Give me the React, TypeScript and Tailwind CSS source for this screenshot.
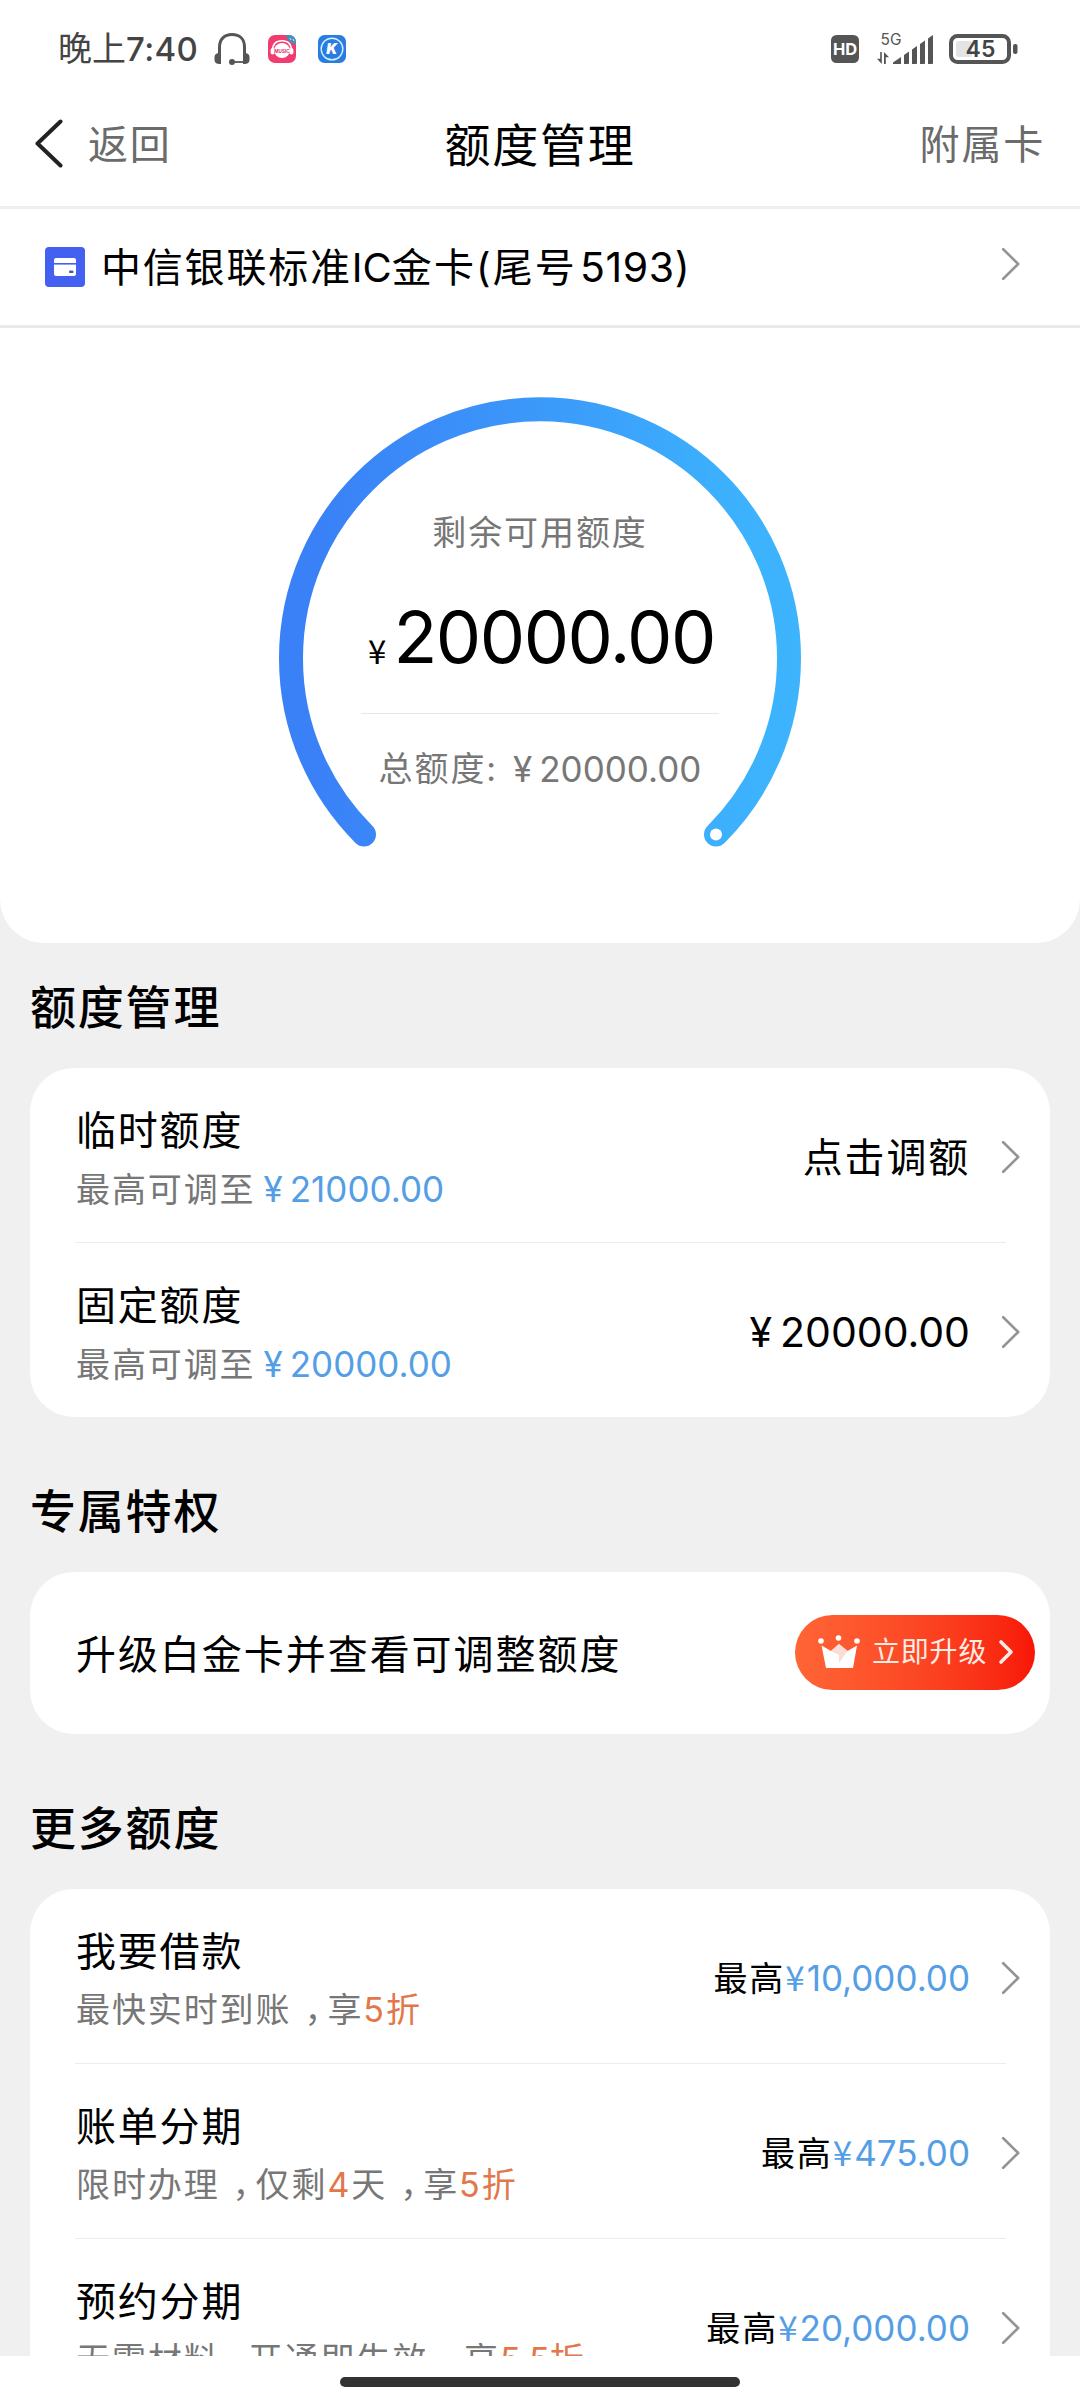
import type { ReactNode } from 'react';

const ChevronRight = () => (
  <svg className="h-[34px] w-[20px] shrink-0" viewBox="0 0 20 34" fill="none">
    <path d="M2.2 2.2 L17.2 17 L2.2 31.8" stroke="#949494" strokeWidth="2.6" strokeLinecap="round" strokeLinejoin="round" />
  </svg>
);

// Half-width comma centred in a full-width cell
const Comma = () => (
  <span className="inline-block w-[36px] pl-[13px] [font-feature-settings:'halt']">，</span>
);

const NarrowComma = () => (
  <span className="inline-block w-[29px] pl-[10px] [font-feature-settings:'halt']">，</span>
);

const Hot = ({ children }: { children: ReactNode }) => <span className="text-[#e2774a]">{children}</span>;

const StatusBar = () => (
  <div className="flex h-[84px] items-center pt-[14px] pl-[58px] pr-[62px]">
    <span className="text-[34px] leading-[40px] text-[#444]">晚上</span>
    <span className="text-[33px] font-medium leading-[40px] tracking-[0.4px] text-[#444]">7:40</span>
    <svg className="ml-[16px] h-[32px] w-[36px]" viewBox="0 0 36 32" fill="none">
      <path d="M5.5 29 V14 C5.5 6 10.5 1.6 18 1.6 C25.5 1.6 30.5 6 30.5 14 V29" stroke="#555" strokeWidth="3" />
      <path d="M7 20 V31 H5.5 C2.5 31 0.5 29.5 0.5 27 V24 C0.5 21.5 2.5 20 5.5 20 Z" fill="#555" />
      <path d="M29 20 V31 H30.5 C33.5 31 35.5 29.5 35.5 27 V24 C35.5 21.5 33.5 20 30.5 20 Z" fill="#555" />
      <path d="M18 29 H31" stroke="#555" strokeWidth="1.8" />
      <circle cx="18" cy="29" r="3" fill="#555" />
    </svg>
    {/* Music app */}
    <svg className="ml-[18px] h-[28px] w-[28px]" viewBox="0 0 28 28">
      <clipPath id="music">
        <rect width="28" height="28" rx="7" />
      </clipPath>
      <g clipPath="url(#music)">
        <rect width="28" height="28" fill="#f23c70" />
        <path d="M18 0 H28 V9 C23 8.5 19.5 5.5 18 0 Z" fill="#3b95bd" />
        <path d="M22 3 L23 5 M25 4 L26 6" stroke="#c8e6f2" strokeWidth="1" />
        <path d="M4.5 16 C4.5 9 8.5 5.8 14 5.8 C19.5 5.8 23.5 9 23.5 16" fill="none" stroke="#fff" strokeWidth="1.6" />
        <ellipse cx="14" cy="15.5" rx="8" ry="7.6" fill="#fff" />
        <rect x="2.6" y="13" width="4" height="6.5" rx="2" fill="#fff" />
        <rect x="21.4" y="13" width="4" height="6.5" rx="2" fill="#fff" />
        <text x="14" y="17.5" textAnchor="middle" fontSize="4.6" fontWeight="700" fill="#e0306a">MUSIC</text>
      </g>
    </svg>
    <svg className="ml-[22px] h-[28px] w-[28px]" viewBox="0 0 28 28">
      <rect width="28" height="28" rx="6.5" fill="#2a7de0" />
      <circle cx="14" cy="14" r="10.8" fill="none" stroke="#d5f1ff" strokeWidth="1.4" />
      <text x="13.8" y="19.2" textAnchor="middle" fontSize="14.5" fontWeight="900" fontStyle="italic" fill="#fff">K</text>
    </svg>

    <svg className="ml-auto h-[28px] w-[28px]" viewBox="0 0 28 28">
      <rect width="28" height="28" rx="5.5" fill="#555" />
      <text x="14" y="20" textAnchor="middle" fontSize="16.5" fontWeight="700" fill="#fff">HD</text>
    </svg>
    <svg className="ml-[18px] h-[32px] w-[56px] overflow-visible" viewBox="0 0 56 32" fill="#555">
      <text x="3.6" y="12" fontSize="15.5" fill="#555">5G</text>
      <path d="M3.2 19 H4.8 V31 L0 25.8 H3.2 Z" />
      <path d="M7 31 V19 L12 24.2 H8.8 V31 Z" />
      <path d="M16 31 V29.5 L24 24 V31 Z" />
      <path d="M27 31 V22 L32 18.5 V30 Q32 31 31 31 Z" />
      <path d="M35 31 V16.5 L40 13 V30 Q40 31 39 31 Z" />
      <path d="M43 31 V11 L48 7.5 V30 Q48 31 47 31 Z" />
      <path d="M51 31 V5.5 L56 2 V30 Q56 31 55 31 Z" />
    </svg>
    <svg className="ml-[16px] h-[30px] w-[69px]" viewBox="0 0 69 30">
      <rect x="2" y="2" width="58" height="26" rx="6.5" fill="none" stroke="#555" strokeWidth="4" />
      <rect x="7" y="7" width="16" height="16" rx="2" fill="#e4e4e4" />
      <rect x="64" y="10" width="4.5" height="10" rx="2" fill="#555" />
      <text x="31.5" y="23.3" textAnchor="middle" fontSize="23" fontWeight="600" fill="#444">45</text>
    </svg>
  </div>
);

const Header = () => (
  <div className="grid h-[125px] grid-cols-3 items-center border-b-[3px] border-[#eee] px-[35px]">
    <div className="flex items-center">
      <svg className="mb-[2px] h-[50px] w-[28px]" viewBox="0 0 28 50" fill="none">
        <path d="M25.5 2.5 L2.5 24.5 L25.5 46.5" stroke="#222" strokeWidth="4" strokeLinecap="round" strokeLinejoin="round" />
      </svg>
      <span className="ml-[25px] text-[40px] tracking-[1.8px] text-[#6b6b6b]">返回</span>
    </div>
    <h1 className="text-center text-[46px] tracking-[1.8px]">额度管理</h1>
    <span className="text-right text-[40px] tracking-[1.8px] text-[#6b6b6b]">附属卡</span>
  </div>
);

const CardSelector = () => (
  <div className="flex h-[119px] items-center border-b-[3px] border-[#eaeaea] pl-[45px] pr-[59px]">
    <svg className="h-[40px] w-[40px]" viewBox="0 0 40 40">
      <rect width="40" height="40" rx="4" fill="#4360f0" />
      <rect x="9" y="11" width="22" height="18" rx="2" fill="#fff" />
      <rect x="9" y="16" width="22" height="1.6" fill="#4360f0" />
      <rect x="24" y="23.5" width="4.5" height="2.6" rx="1.2" fill="#4b5ba8" />
    </svg>
    <span className="ml-[16px] pt-[2px] text-[40px]">
      <span className="tracking-[1.8px]">中信银联标准</span>
      IC
      <span className="tracking-[2.1px]">金卡(尾号</span>
      <span className="ml-[3px] text-[41px] tracking-[0.6px]">5193)</span>
    </span>
    <div className="ml-auto mb-[6px]">
      <ChevronRight />
    </div>
  </div>
);

const Gauge = () => (
  <div className="h-[615px] rounded-b-[44px] bg-white pt-[69px]">
    <div className="relative mx-auto flex h-[460px] w-[522px] flex-col items-center">
      <svg className="absolute inset-0" width="522" height="460" viewBox="0 0 522 460" fill="none">
        <defs>
          <linearGradient id="arc" gradientUnits="userSpaceOnUse" x1="0" y1="0" x2="522" y2="0">
            <stop offset="0.08" stopColor="#3a81f7" />
            <stop offset="0.5" stopColor="#3b99fa" />
            <stop offset="0.85" stopColor="#3cb0fd" />
            <stop offset="1" stopColor="#3eb4fd" />
          </linearGradient>
        </defs>
        <path d="M85 437.5 A249 249 0 1 1 437 437.5" stroke="url(#arc)" strokeWidth="24" strokeLinecap="round" />
        <circle cx="437" cy="437.5" r="6" fill="#fff" />
      </svg>
      <p className="mt-[116px] text-[34px] leading-[40px] tracking-[1.9px] text-[#777]">剩余可用额度</p>
      <p className="mt-[44px] flex items-baseline pl-[3px] text-[72px] leading-[80px]">
        <span className="mr-[7px] translate-y-px font-['Noto_Sans_CJK_SC'] text-[33px] leading-none">¥</span>
        <span className="tracking-[-1.5px]">20000.00</span>
      </p>
      <div className="mt-[36px] h-px w-[358px] bg-[#e8e8e8]" />
      <p className="mt-[35px] flex text-[35px] leading-[40px] text-[#777]">
        <span className="text-[34px] tracking-[1.9px]">总额度:</span>
        <span className="ml-[15px] mr-[7px]">¥</span>
        <span>20000.00</span>
      </p>
    </div>
  </div>
);

type RowProps = { title: string; sub: ReactNode; value: ReactNode; last?: boolean };

const Row = ({ title, sub, value, last }: RowProps) => (
  <>
    <div className="flex h-[174px] shrink-0 justify-between pl-[46px] pr-[29px] pt-[40px]">
      <div className="whitespace-nowrap">
        <p className="text-[40px] leading-[46px] tracking-[1.8px]">{title}</p>
        <p className="mt-[17px] text-[34px] leading-[36px] tracking-[1.9px] text-[#777]">{sub}</p>
      </div>
      <div className="flex h-[98px] items-center gap-[31px]">
        <div className="flex whitespace-nowrap pt-px">{value}</div>
        <ChevronRight />
      </div>
    </div>
    {!last && <div className="ml-[45px] mr-[44px] h-px shrink-0 bg-[#ececec]" />}
  </>
);

const MaxTo = ({ amount }: { amount: string }) => (
  <>
    最高可调至
    <span className="ml-[8px] text-[35px] tracking-normal text-[#549ee6]">
      <span className="mr-[7px]">¥</span>
      {amount}
    </span>
  </>
);

const MaxValue = ({ amount }: { amount: string }) => (
  <p className="text-[35px]">
    <span className="text-[34px] tracking-[1.9px]">最高</span>
    <span className="text-[#549ee6]">
      <span className="mr-[2px] font-['Noto_Sans_CJK_SC'] leading-none">¥</span>
      {amount}
    </span>
  </p>
);

const Heading = ({ children }: { children: string }) => (
  <h2 className="mb-[36px] text-[46px] font-medium leading-[50px] tracking-[1.8px]">{children}</h2>
);

const moreLimits = [
  {
    title: '我要借款',
    sub: <>最快实时到账<Comma />享<Hot>5折</Hot></>,
    amount: '10,000.00',
  },
  {
    title: '账单分期',
    sub: <>限时办理<Comma />仅剩<Hot>4</Hot>天<Comma />享<Hot>5折</Hot></>,
    amount: '475.00',
  },
  {
    title: '预约分期',
    sub: (
      <>
        无需材料<NarrowComma />开通即生效<Comma />享<Hot><span className="tracking-normal">5.5</span>折</Hot>
      </>
    ),
    amount: '20,000.00',
  },
];

export default function App() {
  return (
    <div className="flex h-[2400px] w-[1080px] flex-col overflow-hidden bg-white font-['Inter','Noto_Sans_CJK_SC',sans-serif] text-black">
      <StatusBar />
      <Header />
      <CardSelector />

      <main className="flex min-h-0 flex-1 flex-col overflow-hidden bg-[#f0f0f0]">
        <div className="shrink-0">
          <Gauge />
        </div>

        <section className="mt-[39px] shrink-0 px-[30px]">
          <Heading>额度管理</Heading>
          <div className="rounded-[44px] bg-white">
            <Row
              title="临时额度"
              sub={<MaxTo amount="21000.00" />}
              value={<span className="text-[40px] tracking-[1.8px]">点击调额</span>}
            />
            <Row
              title="固定额度"
              sub={<MaxTo amount="20000.00" />}
              value={<span className="text-[41px]"><span className="mr-[8px]">¥</span>20000.00</span>}
              last
            />
          </div>
        </section>

        <section className="mt-[69px] shrink-0 px-[30px]">
          <Heading>专属特权</Heading>
          <div className="flex h-[162px] items-center justify-between rounded-[44px] bg-white pl-[46px] pr-[15px]">
            <span className="pt-[3px] text-[40px] tracking-[1.95px]">升级白金卡并查看可调整额度</span>
            <button className="mb-[2px] flex h-[75px] w-[240px] items-center rounded-full bg-linear-to-r from-[#ff6536] to-[#f81407] pl-[23px] text-[#ffeae4]">
              <svg className="h-[34px] w-[43px]" viewBox="0 0 43 34" fill="#fff">
                <path d="M3.5 10.5 L13 16 L21 9 L29.5 16 L39 10.5 L35 33 H8 Z" />
                <path d="M21 20 L13 16 L21 9 L29.5 16 L21 28 Z" fill="#fbdcd8" />
                <circle cx="3" cy="6" r="2.8" />
                <circle cx="20.5" cy="3" r="2.8" />
                <circle cx="39" cy="6" r="2.8" />
              </svg>
              <span className="ml-[11px] text-[28px] tracking-[0.8px]">立即升级</span>
              <svg className="ml-[11px] h-[26px] w-[16px]" viewBox="0 0 16 26" fill="none">
                <path d="M3 3 L13 13 L3 23" stroke="#ffeae4" strokeWidth="3.6" strokeLinecap="round" strokeLinejoin="round" />
              </svg>
            </button>
          </div>
        </section>

        <section className="mt-[69px] shrink-0 px-[30px]">
          <Heading>更多额度</Heading>
          <div className="rounded-t-[44px] bg-white">
            {moreLimits.map((item) => (
              <Row key={item.title} title={item.title} sub={item.sub} value={<MaxValue amount={item.amount} />} />
            ))}
          </div>
        </section>
      </main>

      {/* Gesture bar */}
      <div className="flex h-[44px] shrink-0 justify-center bg-white pt-[21px]">
        <div className="h-[10px] w-[400px] rounded-full bg-[#333]" />
      </div>
    </div>
  );
}
